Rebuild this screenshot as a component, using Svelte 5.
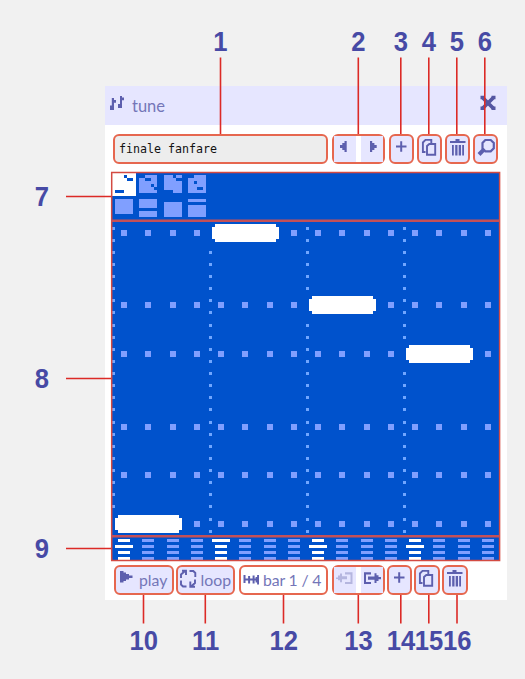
<script>
  // Canvas is a 128 x 128 pixel bitmap scaled up
  const cols = [...Array(16).keys()];
  const dotRows = [19, 43, 59, 83, 99, 115];
  const notes = [[33, 17], [65, 41], [97, 57], [1, 113]];
  const hiddenBy = (x, y) => notes.some(([nx, ny]) => nx - 1 === x && y >= ny && y < ny + 6);
  const beatDots = [0, 32, 64, 96].flatMap((x) =>
    [...Array(26).keys()].map((i) => [x, 18 + i * 4]).filter(([a, b]) => !hiddenBy(a, b))
  );
  const gridDots = dotRows.flatMap((y) =>
    cols.map((c) => [3 + c * 8, y]).filter(([x, b]) => !notes.some(([nx, ny]) => x > nx && x < nx + 22 && b > ny && b < ny + 6))
  );
  const wide = { 0: 1, 4: 0, 8: 1, 12: 1 };
  const drums = cols.flatMap((c) =>
    [0, 1, 2, 3].map((r) => {
      const w = wide[c] === r;
      return [w ? c * 8 + 1 : c * 8 + 2, 121 + r * 2, w ? 6 : 4, 1, c % 4 === 0];
    })
  );
  const thumbs = [
    [9, 1, 6, 6], [17, 1, 6, 6], [25, 1, 6, 6], [1, 9, 6, 5],
    [9, 9, 6, 3], [9, 13, 6, 2], [17, 10, 6, 5], [25, 9, 6, 1], [25, 11, 6, 4]
  ];
  const marks = [
    [4, 1, 1], [5, 2, 2], [1, 6, 3], [9, 1, 2], [11, 2, 2], [13, 4, 1], [14, 5, 1],
    [20, 1, 1], [21, 2, 2], [17, 6, 3], [25, 1, 2], [27, 3, 1], [28, 5, 2]
  ];
  const top = [[1, 220.5], [2, 358.3], [3, 400.8], [4, 428.8], [5, 456.8], [6, 484.8]];
  const side = [[7, 196.5, 205.5], [8, 378.5, 387.5], [9, 548.5, 557.5]];
  const bottom = [[10, 143.5], [11, 205.3], [12, 283.5], [13, 358.3], [14, 400.8], [15, 428.8], [16, 457]];
</script>

{#snippet plus()}
  <svg class="ico" viewBox="0 0 26 30"><path d="M7 12.5h10.500M12.200 7.300v10.400" stroke="#5d5fae" stroke-width="2" /></svg>
{/snippet}
{#snippet copy()}
  <svg class="ico" viewBox="0 0 26 30"><g fill="none" stroke="#5d5fae" stroke-width="1.900">
    <path d="M8.500 18H5.900V8.500L8.500 5.900H14.300V9" /><path d="M10 12L12.300 10H18.200V20.700H10Z" /></g></svg>
{/snippet}
{#snippet trash()}
  <svg class="ico" viewBox="0 0 26 30"><path fill="#5d5fae" d="M10.500 5h4v2h6v2H5V7h5.500zM7 11h1.800v10.500H7zM10.200 11h2.300v10.500h-2.300zM13.700 11h2.300v10.500h-2.300zM17.200 11h1.800v10.500h-1.800z" /></svg>
{/snippet}

<div class="page">
  <section class="window">
    <header>
      <svg width="17" height="16" viewBox="0 0 17 16"><path fill="#5d5fae" d="M2.800 3h2.200v2h2v2.800H5V15H1v-4.500h1.800zM11 1h2v1.500h2V5.300h-2V13H9V9h2z" /></svg>
      <span>tune</span>
      <svg class="close" width="16" height="16" viewBox="0 0 16 16"><path d="M3 3L13 13M13 3L3 13" stroke="#5456a2" stroke-width="3.800" /><path fill="#5456a2" d="M.5 .8h4v3.500h-4zM11.500 .8h4v3.500h-4zM.5 11.500h4V15h-4zM11.500 11.500h4V15h-4z" /></svg>
    </header>
    <div class="tools upper">
      <div class="box name">finale fanfare</div>
      <div class="box nav">
        <i><svg viewBox="0 0 22 26"><path fill="#5d5fae" d="M12.700 5v11h-2.200v-2H8.300v-2H6V9h2.300V7h2.200V5z" /></svg></i>
        <i><svg viewBox="0 0 22 26"><path fill="#5d5fae" d="M9 5v11h2.200v-2h2.200v-2h2.300V9h-2.300V7h-2.200V5z" /></svg></i>
      </div>
      <div class="box sq">{@render plus()}</div>
      <div class="box sq">{@render copy()}</div>
      <div class="box sq">{@render trash()}</div>
      <div class="box sq"><svg class="ico" viewBox="0 0 26 30"><path fill="none" stroke="#5d5fae" stroke-width="2.200" d="M12.300 6h5.400L20.800 9v5.200L17.700 17.300H12.300L9.500 14.300V9z" /><path d="M11 15.300L6 20.500" stroke="#5d5fae" stroke-width="4" /></svg></div>
    </div>
    <svg class="canvas" viewBox="0 0 128 128" shape-rendering="crispEdges">
      <rect width="128" height="128" fill="#0052cc" />
      <rect width="8" height="8" fill="#fff" />
      {#each thumbs as [x, y, w, h]}<rect {x} {y} width={w} height={h} fill="#809fff" />{/each}
      {#each marks as [x, y, w]}<rect {x} {y} width={w} height="1" fill="#0052cc" />{/each}
      {#each beatDots as [x, y]}<rect {x} {y} width="1" height="1" fill="#70a6ff" />{/each}
      {#each gridDots as [x, y]}<rect {x} {y} width="2" height="2" fill="#809fff" />{/each}
      {#each notes as [x, y]}
        <rect {x} y={y + 1} width="22" height="4" fill="#fff" />
        <rect x={x + 1} {y} width="20" height="6" fill="#fff" />
      {/each}
      {#each drums as [x, y, w, h, on]}<rect {x} {y} width={w} height={h} fill={on ? '#fff' : '#809fff'} />{/each}
    </svg>
    <div class="tools lower">
      <div class="box play"><svg width="18" height="26" viewBox="0 0 18 26"><path fill="#5d5fae" d="M4 4h3.500v1.500H10V7h3v1.500h3.500V11H13v1.500h-3V14H7.500v1.500H4z" /></svg><span>play</span></div>
      <div class="box loop"><svg width="19" height="26" viewBox="0 0 19 26"><g fill="none" stroke="#5d5fae" stroke-width="1.900"><path d="M3 11V7.500L6.500 4.500M4 3.700H8V8M11.500 4H15.300L17.300 6V10M3 13.500V17.500L5 19.500H8.500M17 12.500V16L13 19.500M12.300 14.500V19.700H17" /></g></svg><span>loop</span></div>
      <div class="box bar"><svg width="20" height="26" viewBox="0 0 20 26"><path fill="#5d5fae" d="M2.500 8h2v3.500h2.600V9h2v2.500h2.500V8.500h2v3h1V10h1.500V8H18v9.500h-1.900v-2h-1.500v-2h-1v3h-2v-3H9.100v3h-2v-3H4.500V16h-2z" /></svg><span>bar 1 / 4</span></div>
      <div class="box nav">
        <i><svg viewBox="0 0 22 26"><path fill="#b5b6df" d="M2 10.500h2v-2h2v-2h2v2.800h5v3H8v3H6v-2H4V12H2zM11 5.300h7.500V17H11v-2h5.500V7.500H11z" /></svg></i>
        <i><svg viewBox="0 0 22 26"><path fill="#5d5fae" d="M10 5.300H3V17h7v-2H5V7.500h5zM7 9.500h6.500V6.300h2v2h2V10H20v2.300h-2.500V14h-2v2h-2v-3.200H7z" /></svg></i>
      </div>
      <div class="box sq">{@render plus()}</div>
      <div class="box sq">{@render copy()}</div>
      <div class="box sq">{@render trash()}</div>
    </div>
  </section>

  <svg class="callouts" width="525" height="679" viewBox="0 0 525 679">
    <g fill="none" stroke="#dc2a26" stroke-width="1.600">
      {#each top as [, x]}<path d="M{x} 57.500V134" />{/each}
      {#each side as [, y]}<path d="M66 {y}H112" />{/each}
      {#each bottom as [, x]}<path d="M{x} 595V623.500" />{/each}
    </g>
    <g fill="none" stroke="#d34a42">
      <path stroke-width="1.500" d="M111.700 172.400H499.600V560.500H111.700Z" />
      <path stroke="#c35058" stroke-width="2.600" d="M111 220.700H500M111 536.200H500" />
    </g>
    <g class="num">
      {#each top as [n, x]}<text transform="translate({x} 51) scale(.95 1)">{n}</text>{/each}
      {#each side as [n, , y]}<text transform="translate(42 {y}) scale(.95 1)">{n}</text>{/each}
      {#each bottom as [n, x]}<text transform="translate({x + 0.3} 650) scale(.95 1)">{n}</text>{/each}
    </g>
  </svg>
</div>

<style>
  :global(body) { margin: 0; }
  .page { position: relative; width: 525px; height: 679px; box-sizing: border-box; padding: 86px 18px 0 105px; background: #f1f1f1; overflow: hidden; }
  .window { width: 402px; height: 514px; background: #fff; display: flex; flex-direction: column; color: #7476b8; font-family: Lato, "Open Sans", sans-serif; font-size: 16.500px; }
  header { height: 39px; display: flex; align-items: flex-start; background: #e6e6ff; padding: 9px 11px 0 4px; box-sizing: border-box; }
  header span { margin-left: 6px; line-height: 22px; }
  .close { margin-left: auto; }
  .tools { display: flex; height: 30px; }
  .upper { margin: 9px 0 0 8px; gap: 2.300px; }
  .lower { margin: 5px 0 0 9px; gap: 2px; }
  .box { box-sizing: border-box; height: 30px; border: 2px solid #e6674f; border-radius: 6px; background: #e6e6ff; display: flex; flex: none; white-space: pre; }
  .name { width: 215px; margin-right: 2px; background: #ededed; color: #111; font: 11.650px/26px "DejaVu Sans Mono", monospace; padding-left: 4px; }
  .nav { width: 53px; background: #fff; justify-content: space-between; }
  .nav i { width: 22px; height: 26px; background: #e6e6ff; }
  .nav svg { width: 22px; height: 26px; display: block; }
  .upper .nav { margin-right: 1px; }
  .sq { width: 25.700px; }
  .ico { width: 26px; height: 30px; margin: -2px; flex: none; }
  .canvas { width: 388px; height: 388px; margin: 8px 0 0 7px; flex: none; }
  .play, .loop { width: 59.500px; }
  .bar { width: 88.500px; margin: 0 2px; background: #fff; }
  .lower svg { flex: none; }
  .lower span { line-height: 25px; font-size: 15.800px; }
  .play span { margin-left: 5px; }
  .loop span { margin-left: 4px; }
  .bar span { margin-left: 2px; letter-spacing: -.15px; }
  .callouts { position: absolute; left: 0; top: 0; }
  .num { font: bold 27px "Liberation Sans", Arial, sans-serif; fill: #474aa5; text-anchor: middle; }
</style>
